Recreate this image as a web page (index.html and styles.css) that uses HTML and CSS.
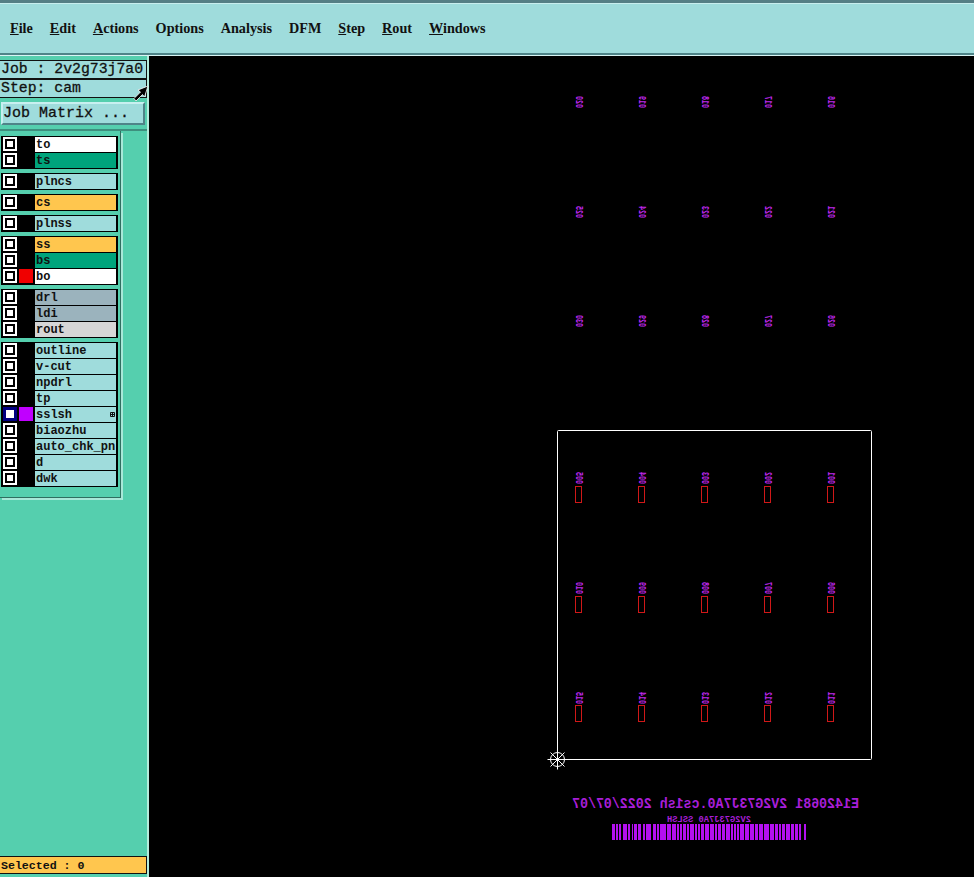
FILE: index.html
```html
<!DOCTYPE html>
<html lang="en">
<head>
    <meta charset="UTF-8">
    <meta name="viewport" content="width=device-width, initial-scale=1.0">
    <title>Graphic Station</title>
    <link rel="stylesheet" href="styles.css">
</head>
<body>
    <div class="menubar">
        <span class="menu"><u>F</u>ile</span>
        <span class="menu"><u>E</u>dit</span>
        <span class="menu"><u>A</u>ctions</span>
        <span class="menu">Options</span>
        <span class="menu">Analysis</span>
        <span class="menu">DFM</span>
        <span class="menu"><u>S</u>tep</span>
        <span class="menu"><u>R</u>out</span>
        <span class="menu"><u>W</u>indows</span>
    </div>

    <div class="main">
        <div class="sidebar">
            <div class="tools">
                <div class="info">Job : 2v2g73j7a0</div>
                <div class="info">Step: cam</div>
                <div class="button-row">
                    <button class="button">Job Matrix ...</button>
                </div>
            </div>

            <div class="panel-row">
                <div class="panel">
                    <div class="group">
                        <div class="row"><span class="check"></span><span class="swatch"></span><span class="name white">to</span></div>
                        <div class="row"><span class="check"></span><span class="swatch"></span><span class="name green">ts</span></div>
                    </div>
                    <div class="group">
                        <div class="row"><span class="check"></span><span class="swatch"></span><span class="name">plncs</span></div>
                    </div>
                    <div class="group">
                        <div class="row"><span class="check"></span><span class="swatch"></span><span class="name orange">cs</span></div>
                    </div>
                    <div class="group">
                        <div class="row"><span class="check"></span><span class="swatch"></span><span class="name">plnss</span></div>
                    </div>
                    <div class="group">
                        <div class="row"><span class="check"></span><span class="swatch"></span><span class="name orange">ss</span></div>
                        <div class="row"><span class="check"></span><span class="swatch"></span><span class="name green">bs</span></div>
                        <div class="row"><span class="check"></span><span class="swatch red"></span><span class="name white">bo</span></div>
                    </div>
                    <div class="group">
                        <div class="row"><span class="check"></span><span class="swatch"></span><span class="name slate">drl</span></div>
                        <div class="row"><span class="check"></span><span class="swatch"></span><span class="name slate">ldi</span></div>
                        <div class="row"><span class="check"></span><span class="swatch"></span><span class="name grey">rout</span></div>
                    </div>
                    <div class="group">
                        <div class="row"><span class="check"></span><span class="swatch"></span><span class="name">outline</span></div>
                        <div class="row"><span class="check"></span><span class="swatch"></span><span class="name">v-cut</span></div>
                        <div class="row"><span class="check"></span><span class="swatch"></span><span class="name">npdrl</span></div>
                        <div class="row"><span class="check"></span><span class="swatch"></span><span class="name">tp</span></div>
                        <div class="row"><span class="check on"></span><span class="swatch magenta"></span><span class="name">sslsh
                            <svg class="mark" width="5" height="5" viewBox="0 0 5 5"><path d="M.5.5h4v4h-4zM2.5.5v4M.5 2.5h4" fill="none" stroke="#111" stroke-width="1"/></svg>
                        </span></div>
                        <div class="row"><span class="check"></span><span class="swatch"></span><span class="name">biaozhu</span></div>
                        <div class="row"><span class="check"></span><span class="swatch"></span><span class="name">auto_chk_pnl</span></div>
                        <div class="row"><span class="check"></span><span class="swatch"></span><span class="name">d</span></div>
                        <div class="row"><span class="check"></span><span class="swatch"></span><span class="name">dwk</span></div>
                    </div>
                </div>
            </div>

            <div class="status">Selected : 0</div>

            <svg class="cursor" width="17" height="17" viewBox="0 0 17 17">
                <path d="M16 1L6 5l2.500 2L2 13.500 4 16l6.500-6.500L12.500 12z" fill="#000" stroke="#fff" stroke-width="0.8"/>
            </svg>
        </div>

        <svg class="canvas" width="825" height="821" viewBox="149 56 825 821">
            <!-- profile -->
            <rect class="profile" x="557.500" y="430.500" width="314" height="329" rx="1"/>

            <!-- datum -->
            <g class="datum">
                <circle cx="557.500" cy="759.500" r="7"/>
                <path d="M547.500 759.500h20M557.500 749.500v20M550.500 752.500l14 14M564.500 752.500l-14 14"/>
            </g>

            <!-- pads -->
            <g class="pads">
                <rect x="575.500" y="486.500" width="6" height="16"/><rect x="638.500" y="486.500" width="6" height="16"/><rect x="701.500" y="486.500" width="6" height="16"/><rect x="764.500" y="486.500" width="6" height="16"/><rect x="827.500" y="486.500" width="6" height="16"/>
                <rect x="575.500" y="596.500" width="6" height="16"/><rect x="638.500" y="596.500" width="6" height="16"/><rect x="701.500" y="596.500" width="6" height="16"/><rect x="764.500" y="596.500" width="6" height="16"/><rect x="827.500" y="596.500" width="6" height="16"/>
                <rect x="575.500" y="705.500" width="6" height="16"/><rect x="638.500" y="705.500" width="6" height="16"/><rect x="701.500" y="705.500" width="6" height="16"/><rect x="764.500" y="705.500" width="6" height="16"/><rect x="827.500" y="705.500" width="6" height="16"/>
            </g>

            <!-- mirrored board numbers -->
            <g class="num">
                <text transform="translate(575.500 108) rotate(-90) scale(1 -1)" textLength="12" lengthAdjust="spacingAndGlyphs">020</text>
                <text transform="translate(638.500 108) rotate(-90) scale(1 -1)" textLength="12" lengthAdjust="spacingAndGlyphs">019</text>
                <text transform="translate(701.500 108) rotate(-90) scale(1 -1)" textLength="12" lengthAdjust="spacingAndGlyphs">018</text>
                <text transform="translate(764.500 108) rotate(-90) scale(1 -1)" textLength="12" lengthAdjust="spacingAndGlyphs">017</text>
                <text transform="translate(827.500 108) rotate(-90) scale(1 -1)" textLength="12" lengthAdjust="spacingAndGlyphs">016</text>

                <text transform="translate(575.500 218) rotate(-90) scale(1 -1)" textLength="12" lengthAdjust="spacingAndGlyphs">025</text>
                <text transform="translate(638.500 218) rotate(-90) scale(1 -1)" textLength="12" lengthAdjust="spacingAndGlyphs">024</text>
                <text transform="translate(701.500 218) rotate(-90) scale(1 -1)" textLength="12" lengthAdjust="spacingAndGlyphs">023</text>
                <text transform="translate(764.500 218) rotate(-90) scale(1 -1)" textLength="12" lengthAdjust="spacingAndGlyphs">022</text>
                <text transform="translate(827.500 218) rotate(-90) scale(1 -1)" textLength="12" lengthAdjust="spacingAndGlyphs">021</text>

                <text transform="translate(575.500 327) rotate(-90) scale(1 -1)" textLength="12" lengthAdjust="spacingAndGlyphs">030</text>
                <text transform="translate(638.500 327) rotate(-90) scale(1 -1)" textLength="12" lengthAdjust="spacingAndGlyphs">029</text>
                <text transform="translate(701.500 327) rotate(-90) scale(1 -1)" textLength="12" lengthAdjust="spacingAndGlyphs">028</text>
                <text transform="translate(764.500 327) rotate(-90) scale(1 -1)" textLength="12" lengthAdjust="spacingAndGlyphs">027</text>
                <text transform="translate(827.500 327) rotate(-90) scale(1 -1)" textLength="12" lengthAdjust="spacingAndGlyphs">026</text>

                <text transform="translate(575.500 484) rotate(-90) scale(1 -1)" textLength="12" lengthAdjust="spacingAndGlyphs">005</text>
                <text transform="translate(638.500 484) rotate(-90) scale(1 -1)" textLength="12" lengthAdjust="spacingAndGlyphs">004</text>
                <text transform="translate(701.500 484) rotate(-90) scale(1 -1)" textLength="12" lengthAdjust="spacingAndGlyphs">003</text>
                <text transform="translate(764.500 484) rotate(-90) scale(1 -1)" textLength="12" lengthAdjust="spacingAndGlyphs">002</text>
                <text transform="translate(827.500 484) rotate(-90) scale(1 -1)" textLength="12" lengthAdjust="spacingAndGlyphs">001</text>

                <text transform="translate(575.500 594) rotate(-90) scale(1 -1)" textLength="12" lengthAdjust="spacingAndGlyphs">010</text>
                <text transform="translate(638.500 594) rotate(-90) scale(1 -1)" textLength="12" lengthAdjust="spacingAndGlyphs">009</text>
                <text transform="translate(701.500 594) rotate(-90) scale(1 -1)" textLength="12" lengthAdjust="spacingAndGlyphs">008</text>
                <text transform="translate(764.500 594) rotate(-90) scale(1 -1)" textLength="12" lengthAdjust="spacingAndGlyphs">007</text>
                <text transform="translate(827.500 594) rotate(-90) scale(1 -1)" textLength="12" lengthAdjust="spacingAndGlyphs">006</text>

                <text transform="translate(575.500 704) rotate(-90) scale(1 -1)" textLength="12" lengthAdjust="spacingAndGlyphs">015</text>
                <text transform="translate(638.500 704) rotate(-90) scale(1 -1)" textLength="12" lengthAdjust="spacingAndGlyphs">014</text>
                <text transform="translate(701.500 704) rotate(-90) scale(1 -1)" textLength="12" lengthAdjust="spacingAndGlyphs">013</text>
                <text transform="translate(764.500 704) rotate(-90) scale(1 -1)" textLength="12" lengthAdjust="spacingAndGlyphs">012</text>
                <text transform="translate(827.500 704) rotate(-90) scale(1 -1)" textLength="12" lengthAdjust="spacingAndGlyphs">011</text>
            </g>

            <!-- title block, mirrored -->
            <text class="title" transform="translate(859 808) scale(-1 1)" textLength="287" lengthAdjust="spacingAndGlyphs">E1420681 2V2G73J7A0.cs1sh 2022/07/07</text>
            <text class="subtitle" transform="translate(751 822) scale(-1 1)" textLength="84" lengthAdjust="spacingAndGlyphs">2V2G73J7A0 SSLSH</text>

            <!-- barcode -->
            <path class="barcode" d="M612 824h3v16h-3zM616 824h2v16h-2zM619 824h2v16h-2zM623 824h4v16h-4zM628 824h2v16h-2zM632 824h1v16h-1zM634 824h3v16h-3zM638 824h3v16h-3zM643 824h2v16h-2zM646 824h5v16h-5zM653 824h3v16h-3zM657 824h2v16h-2zM660 824h6v16h-6zM667 824h4v16h-4zM672 824h4v16h-4zM677 824h2v16h-2zM680 824h2v16h-2zM683 824h3v16h-3zM687 824h2v16h-2zM690 824h4v16h-4zM695 824h2v16h-2zM698 824h2v16h-2zM701 824h3v16h-3zM705 824h4v16h-4zM710 824h4v16h-4zM715 824h2v16h-2zM718 824h3v16h-3zM722 824h3v16h-3zM726 824h4v16h-4zM731 824h2v16h-2zM734 824h2v16h-2zM737 824h2v16h-2zM740 824h4v16h-4zM745 824h4v16h-4zM750 824h4v16h-4zM755 824h3v16h-3zM759 824h4v16h-4zM764 824h5v16h-5zM770 824h4v16h-4zM775 824h3v16h-3zM779 824h2v16h-2zM782 824h3v16h-3zM786 824h4v16h-4zM791 824h3v16h-3zM795 824h3v16h-3zM799 824h2v16h-2zM804 824h2v16h-2z"/>
        </svg>
    </div>
</body>
</html>
```

FILE: styles.css
```css
html, body {
    margin: 0;
    height: 100%;
}
body {
    width: 974px;
    height: 877px;
    background-color: black;
    display: flex;
    flex-direction: column;
    overflow: hidden;
}

/* menu bar */
.menubar {
    height: 50px;
    flex: none;
    background-color: #9fdcdc;
    border-top: 3px solid #557f85;
    border-bottom: 2px solid #4f8488;
    box-shadow: inset 0 1px 0 #c8eeee, 0 1px 0 #d8f4f4;
    display: flex;
    align-items: center;
    gap: 17px;
    padding-left: 10px;
    margin-bottom: 1px;
    font-family: "Liberation Serif", serif;
    font-size: 14.2px;
    font-weight: bold;
    color: #111;
}
.menu {
    white-space: nowrap;
}

.main {
    flex: 1;
    display: flex;
    min-height: 0;
}

/* left side */
.sidebar {
    position: relative;
    width: 147px;
    flex: none;
    border-right: 2px solid #b4ecdc;
    background-color: #55cfae;
    display: flex;
    flex-direction: column;
}
.tools {
    height: 69px;
    padding-top: 4px;
    border-bottom: 2px solid #3e8f7e;
    color: #111;
    font-family: "Liberation Mono", monospace;
}
.info {
    height: 17px;
    line-height: 17px;
    padding-left: 1px;
    background-color: #9fdcdc;
    border-top: 1px solid #111;
    border-right: 1px solid #111;
    font-size: 14.8px;
    white-space: nowrap;
    -webkit-text-stroke: 0.3px #111;
}
.info + .info {
    border-top-width: 2px;
}
.button-row {
    border-top: 1px solid #111;
    padding: 4px 2px 0 1px;
}
.button {
    display: block;
    width: 100%;
    height: 23px;
    padding: 0;
    background-color: #9fdcdc;
    color: #111;
    border: 2px solid;
    border-color: #c8f0f0 #4f8488 #4f8488 #c8f0f0;
    font-family: "Liberation Mono", monospace;
    font-size: 15px;
    text-align: left;
    -webkit-text-stroke: 0.3px #111;
}

/* layer list */
.panel-row {
    flex: 1;
    min-height: 0;
}
.panel {
    width: 119px;
    padding: 5px 0 10px 1px;
    border-right: 1px solid #2f6f60;
    border-bottom: 1px solid #2f6f60;
    box-shadow: 2px 2px 0 #a8e8d8;
    display: flex;
    flex-direction: column;
    gap: 4px;
}
.group {
    width: 117px;
    box-sizing: border-box;
    padding: 1px 2px;
    background-color: black;
    display: flex;
    flex-direction: column;
    gap: 1px;
}
.row {
    height: 15px;
    display: flex;
    gap: 2px;
    color: #111;
    font-family: "Liberation Mono", monospace;
    font-size: 12px;
    font-weight: bold;
}
.check {
    width: 14px;
    height: 14px;
    flex: none;
    box-sizing: border-box;
    border: 2px solid white;
    background-color: white;
    box-shadow: inset 0 0 0 2px black;
}
.check.on {
    border-color: #000080;
    box-shadow: inset 0 0 0 1px #000080;
}
.swatch {
    width: 14px;
    height: 14px;
    flex: none;
    background-color: black;
}
.swatch.red {
    background-color: #f00000;
}
.swatch.magenta {
    background-color: #c000ff;
}
.name {
    flex: 1;
    min-width: 0;
    overflow: hidden;
    white-space: nowrap;
    display: flex;
    align-items: center;
    justify-content: space-between;
    padding: 0 1px;
    background-color: #9fdcdc;
}
.name.white {
    background-color: white;
}
.name.green {
    background-color: #00a47c;
}
.name.orange {
    background-color: #ffc64e;
}
.name.slate {
    background-color: #9bb3bd;
}
.name.grey {
    background-color: #d6d6d6;
}
.mark {
    flex: none;
}

/* bottom status */
.status {
    height: 16px;
    line-height: 17px;
    margin-bottom: 3px;
    padding-left: 1px;
    background-color: #ffc64e;
    border-top: 1px solid #111;
    border-bottom: 1px solid #111;
    border-right: 1px solid #111;
    color: #111;
    font-family: "Liberation Mono", monospace;
    font-size: 11.6px;
    font-weight: bold;
}
.cursor {
    position: absolute;
    left: 132px;
    top: 29px;
}

/* drawing area */
.canvas {
    display: block;
    flex: none;
    background-color: black;
}
.profile {
    fill: none;
    stroke: white;
    stroke-width: 1;
}
.datum {
    fill: none;
    stroke: white;
    stroke-width: 1;
}
.pads rect {
    fill: none;
    stroke: #d01818;
    stroke-width: 1;
}
.num text {
    fill: #c028f0;
    font-family: "Liberation Mono", monospace;
    font-size: 10px;
    font-weight: bold;
}
.title {
    fill: #a81ed8;
    font-family: "Liberation Mono", monospace;
    font-size: 14px;
    font-weight: bold;
}
.subtitle {
    fill: #a81ed8;
    font-family: "Liberation Mono", monospace;
    font-size: 8.5px;
    font-weight: bold;
}
.barcode {
    fill: #b410f0;
}
```
